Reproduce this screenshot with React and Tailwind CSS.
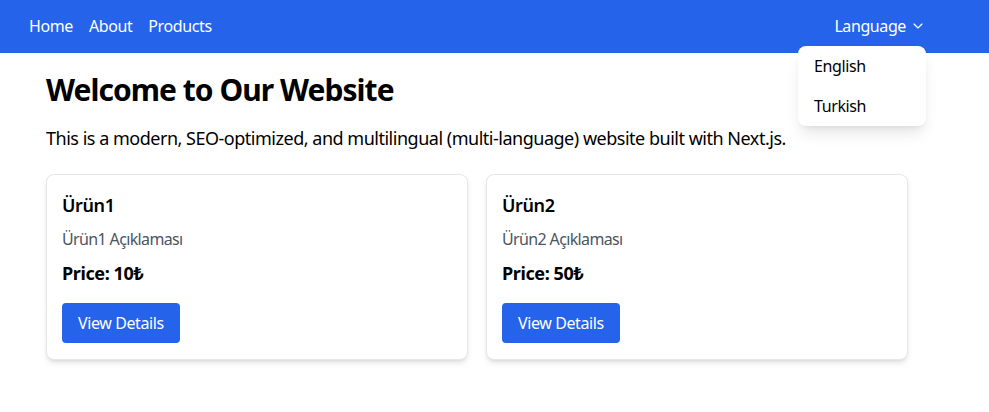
import React from "react";
import { ChevronDown } from "lucide-react";

const font = { fontFamily: '"Noto Sans", "Open Sans", sans-serif' };

function Card({ name, price }) {
  return (
    <div className="w-[422px] rounded-lg border border-[#e5e7eb] bg-white px-[15px] py-4 shadow-md">
      <h2 className="mb-2 text-lg font-semibold">{name}</h2>
      <p className="mb-2 tracking-[-0.04em] text-[#4b5563]">{name} Açıklaması</p>
      <p className="text-lg font-bold">Price: {price}₺</p>
      <button className="mt-4 rounded bg-[#2563eb] px-4 py-2 text-white">View Details</button>
    </div>
  );
}

export default function App() {
  return (
    <div className="min-h-[412px] bg-white text-black tracking-[-0.025em]" style={font}>
      <nav className="flex h-[53px] items-center justify-between bg-[#2563eb] pb-[2px] pl-[29px] pr-[63px] text-white">
        <div className="flex gap-4">
          <a>Home</a>
          <a>About</a>
          <a>Products</a>
        </div>
        <div className="relative">
          <button className="flex items-center gap-1">
            Language <ChevronDown size={16} strokeWidth={1.75} />
          </button>
          <div className="absolute right-0 top-full z-10 mt-2 w-32 rounded-lg bg-white text-black shadow-lg">
            <div className="px-4 py-2">English</div>
            <div className="px-4 py-2">Turkish</div>
          </div>
        </div>
      </nav>
      <main className="ml-[46px] w-[862px] pt-[19px]">
        <h1 className="mb-4 text-3xl font-bold tracking-[-0.032em]">Welcome to Our Website</h1>
        <p className="mb-[22px] text-lg tracking-[-0.027em]">This is a modern, SEO-optimized, and multilingual (multi-language) website built with Next.js.</p>
        <div className="flex gap-[18px]">
          <Card name="Ürün1" price="10" />
          <Card name="Ürün2" price="50" />
        </div>
      </main>
    </div>
  );
}
